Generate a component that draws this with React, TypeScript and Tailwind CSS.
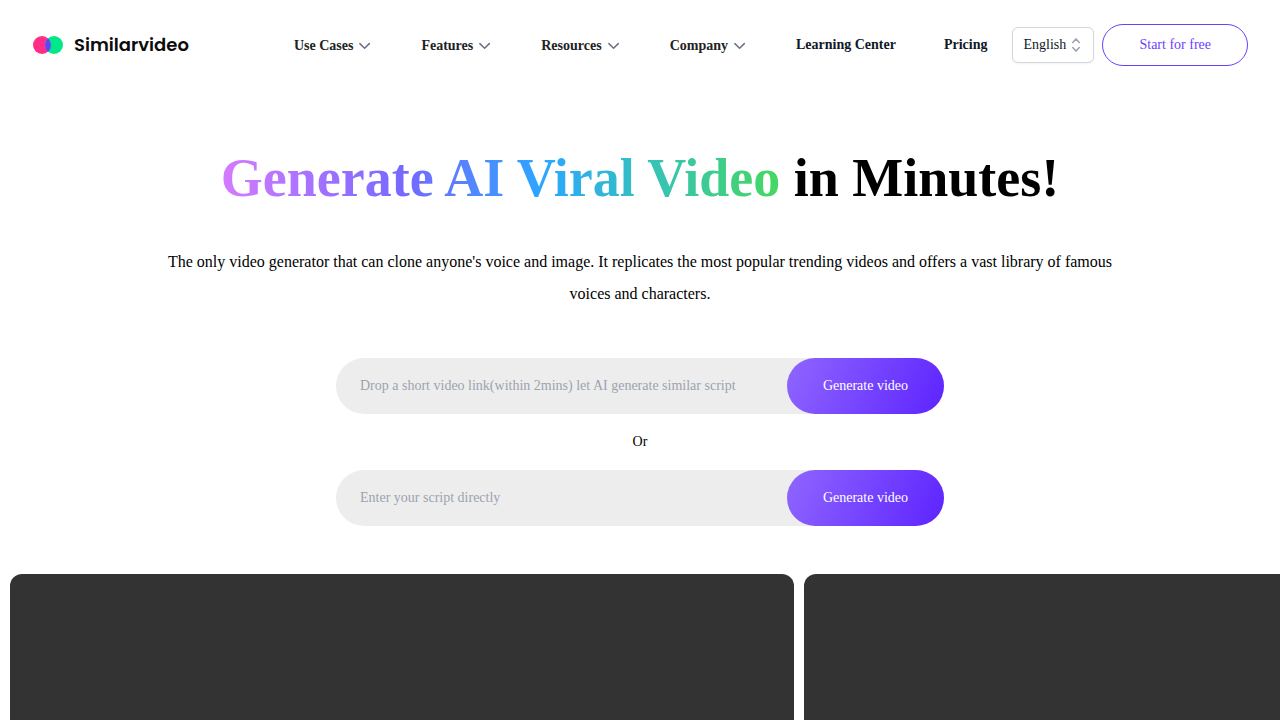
import React from "react";

const menus = ["Use Cases", "Features", "Resources", "Company"];
const links = ["Learning Center", "Pricing"];

function Logo() {
  return (
    <a href="#" className="flex items-center gap-[11px]">
      <svg width="30" height="18" viewBox="0 0 30 18" className="ml-px" aria-hidden="true">
        <circle cx="9" cy="9" r="9" fill="#ff2d87" />
        <circle cx="21" cy="9" r="9" fill="#00e887" />
        <path d="M15 2.3a9 9 0 0 1 0 13.4a9 9 0 0 1 0-13.4z" fill="#6440ff" />
      </svg>
      <span className="font-[Poppins,Inter,sans-serif] text-lg font-semibold text-[#0c0c0c]">
        Similarvideo
      </span>
    </a>
  );
}

function ChevronDown() {
  return (
    <svg viewBox="0 0 20 20" className="mt-px size-5 text-gray-500" fill="none" aria-hidden="true">
      <path
        d="M6.9 7.6l4.7 4.7 4.7-4.7"
        stroke="currentColor"
        strokeWidth="1.5"
        strokeLinecap="round"
        strokeLinejoin="round"
      />
    </svg>
  );
}

function LanguageSelect() {
  return (
    <div className="relative">
      <select
        aria-label="Language"
        className="h-9 w-[82px] appearance-none rounded-md border border-gray-300 bg-white pl-2.5 text-sm text-gray-900 shadow-xs"
      >
        <option>English</option>
      </select>
      <svg
        viewBox="0 0 20 20"
        className="pointer-events-none absolute top-2 right-2 size-5 text-gray-400"
        fill="none"
        aria-hidden="true"
      >
        <path
          d="M6.7 7.4L10 3.9l3.3 3.5M6.7 12.6l3.3 3.5 3.3-3.5"
          stroke="currentColor"
          strokeWidth="1.5"
          strokeLinecap="round"
          strokeLinejoin="round"
        />
      </svg>
    </div>
  );
}

function PromptForm({ placeholder }: { placeholder: string }) {
  return (
    <form
      className="flex h-14 w-full max-w-[608px] rounded-full bg-[#ededed]"
      onSubmit={(e) => e.preventDefault()}
    >
      <input
        type="text"
        aria-label={placeholder}
        placeholder={placeholder}
        className="min-w-0 flex-1 bg-transparent pl-6 text-sm outline-none placeholder:text-[#9ca3af]"
      />
      <button
        type="submit"
        className="rounded-full bg-[linear-gradient(113deg,#8f66ff_0%,#5d24ff_100%)] px-9 text-sm text-white"
      >
        Generate video
      </button>
    </form>
  );
}

export default function App() {
  return (
    <div className="flex min-h-screen flex-col overflow-x-hidden bg-white font-['Liberation_Serif',serif] text-black">
      <header className="flex items-center justify-between px-8 py-6">
        <Logo />
        <div className="flex items-center gap-[25px]">
          <nav className="flex items-center gap-12 text-sm font-bold">
            {menus.map((label) => (
              <button key={label} type="button" className="flex items-center text-[#222222]">
                <span className="mt-px">{label}</span>
                <ChevronDown />
              </button>
            ))}
            {links.map((label) => (
              <a key={label} href="#" className="text-gray-900">
                {label}
              </a>
            ))}
          </nav>
          <div className="flex items-center gap-2">
            <LanguageSelect />
            <button
              type="button"
              className="h-[42px] rounded-full border border-[#6b3fff] px-9 text-sm text-[#6b3fff]"
            >
              Start for free
            </button>
          </div>
        </div>
      </header>

      <main className="flex flex-1 flex-col">
        <section className="flex flex-col items-center px-8 pt-14">
          <h1 className="text-center text-[54px] leading-16 font-bold">
            <span className="bg-[linear-gradient(90deg,#d57bff_0%,#7569ff_33%,#2ba7ff_58%,#36c2b8_77%,#46d860_100%)] bg-clip-text text-transparent">
              Generate AI Viral Video
            </span>{" "}
            in Minutes!
          </h1>
          <p className="mt-9 max-w-[960px] text-center text-base leading-8">
            The only video generator that can clone anyone's voice and image. It replicates the
            most popular trending videos and offers a vast library of famous voices and characters.
          </p>
          <div className="mt-12 flex w-full flex-col items-center">
            <PromptForm placeholder="Drop a short video link(within 2mins) let AI generate similar script" />
            <p className="text-sm leading-14">Or</p>
            <PromptForm placeholder="Enter your script directly" />
          </div>
        </section>

        <section aria-label="Videos" className="mt-12 flex flex-1 gap-2.5 overflow-hidden pl-2.5">
          <div className="min-h-36 w-[784px] shrink-0 rounded-t-xl bg-[#333333]" />
          <div className="min-h-36 w-[784px] shrink-0 rounded-t-xl bg-[#333333]" />
        </section>
      </main>
    </div>
  );
}
